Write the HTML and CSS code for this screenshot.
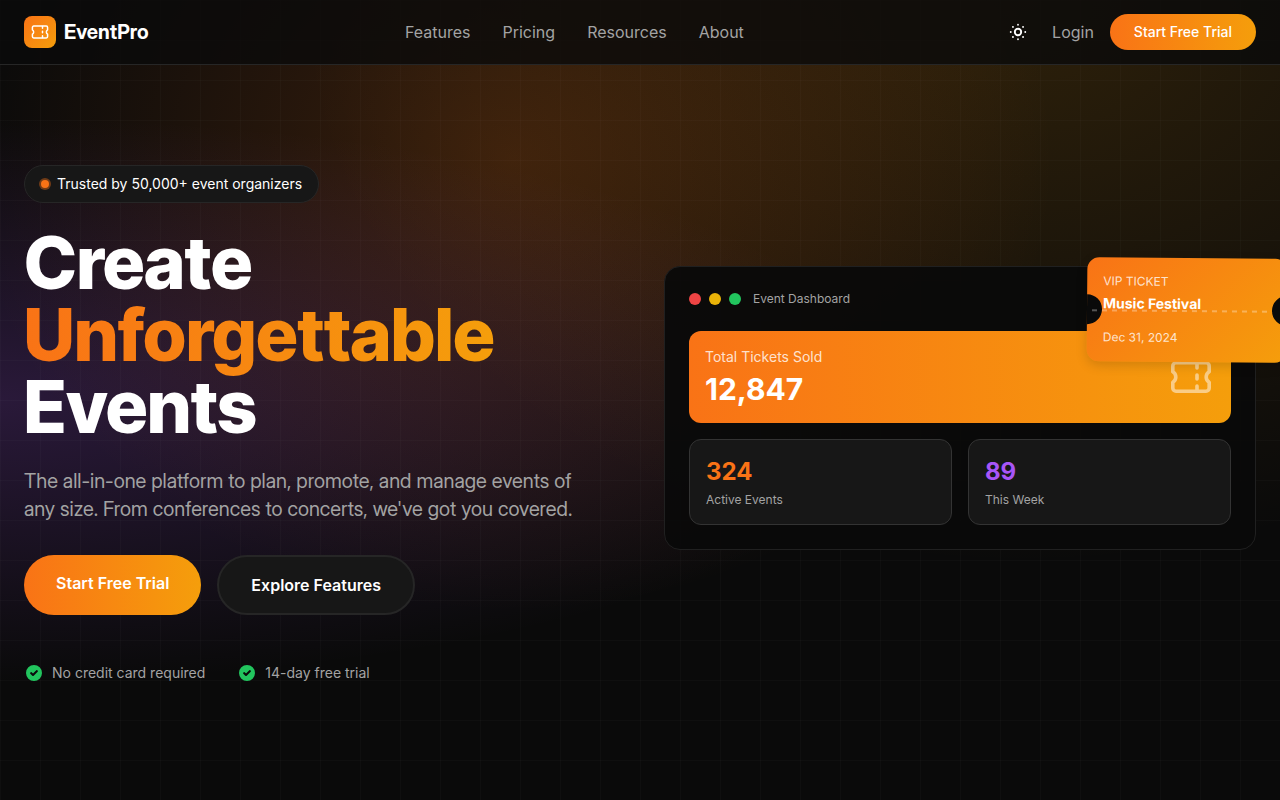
FILE: index.html
```html
<!DOCTYPE html>
<html lang="en">
<head>
<meta charset="utf-8">
<meta name="viewport" content="width=device-width, initial-scale=1">
<title>EventPro</title>
<link rel="stylesheet" href="styles.css">
</head>
<body>
<svg class="sprite" aria-hidden="true">
  <symbol id="ticket" viewBox="0 0 24 24">
    <path d="M2.900 9.400V6.500A1.600 1.600 0 0 1 4.500 4.900h15A1.600 1.600 0 0 1 21.100 6.500v2.900a3 3 0 0 0 0 5.200v2.900a1.600 1.600 0 0 1-1.600 1.600h-15A1.600 1.600 0 0 1 2.900 17.500v-2.900a3 3 0 0 0 0-5.200z" fill="none" stroke="currentColor" stroke-width="1.800" stroke-linejoin="round"/>
    <path d="M15 5.500v2M15 11v2M15 16.500v2" fill="none" stroke="currentColor" stroke-width="1.800" stroke-linecap="round"/>
  </symbol>
  <symbol id="check" viewBox="0 0 20 20">
    <path fill-rule="evenodd" fill="currentColor" d="M10 18a8 8 0 1 0 0-16 8 8 0 0 0 0 16zm3.700-9.300a1 1 0 0 0-1.400-1.400L9 10.600 7.700 9.300a1 1 0 0 0-1.400 1.400l2 2a1 1 0 0 0 1.400 0l4-4z"/>
  </symbol>
</svg>

<header class="header">
  <a class="brand" href="#">
    <span class="brand-mark"><svg class="icon-sm"><use href="#ticket"/></svg></span>
    <span>EventPro</span>
  </a>
  <nav class="nav">
    <a href="#">Features</a>
    <a href="#">Pricing</a>
    <a href="#">Resources</a>
    <a href="#">About</a>
  </nav>
  <div class="actions">
    <button class="theme" type="button" aria-label="Toggle theme">
      <svg class="icon-sm" viewBox="0 0 20 20">
        <circle cx="10" cy="10" r="3.200" fill="none" stroke="currentColor" stroke-width="1.900"/>
        <g stroke="currentColor" stroke-width="1.800" stroke-linecap="round">
          <path d="M10 2.700v.1M10 17.200v.1M2.700 10h.1M17.200 10h.1M4.900 4.900h.1M15 15h.1M4.900 15h.1M15 4.900h.1"/>
        </g>
      </svg>
    </button>
    <a class="login" href="#">Login</a>
    <a class="pill pill-small" href="#">Start Free Trial</a>
  </div>
</header>

<main class="hero">
  <section class="intro">
    <p class="badge"><span class="pulse"></span>Trusted by 50,000+ event organizers</p>
    <h1>Create <span class="accent">Unforgettable</span> Events</h1>
    <p class="lead">The all-in-one platform to plan, promote, and manage events of any size. From conferences to concerts, we've got you covered.</p>
    <div class="cta">
      <a class="pill pill-large" href="#">Start Free Trial</a>
      <a class="pill-outline" href="#">Explore Features</a>
    </div>
    <ul class="perks">
      <li><svg class="icon-sm"><use href="#check"/></svg>No credit card required</li>
      <li><svg class="icon-sm"><use href="#check"/></svg>14-day free trial</li>
    </ul>
  </section>

  <section class="preview" aria-label="Event Dashboard">
    <div class="dashboard">
      <div class="window-bar">
        <span class="dot red"></span><span class="dot yellow"></span><span class="dot green"></span>
        <span class="window-title">Event Dashboard</span>
      </div>
      <div class="sales">
        <div>
          <p class="sales-label">Total Tickets Sold</p>
          <p class="sales-value">12,847</p>
        </div>
        <svg class="icon-lg"><use href="#ticket"/></svg>
      </div>
      <div class="stats">
        <div class="stat"><p class="stat-value orange">324</p><p class="stat-label">Active Events</p></div>
        <div class="stat"><p class="stat-value purple">89</p><p class="stat-label">This Week</p></div>
      </div>
    </div>
    <aside class="ticket">
      <p class="ticket-kind">VIP TICKET</p>
      <p class="ticket-name">Music Festival</p>
      <p class="ticket-date">Dec 31, 2024</p>
      <span class="notch notch-left"></span>
      <span class="tear"></span>
      <span class="notch notch-right"></span>
    </aside>
  </section>
</main>
</body>
</html>
```

FILE: styles.css
```css
:root {
  --bg: #0a0a0a;
  --surface: #171717;
  --line: #262626;
  --muted: #a3a3a3;
  --orange: #f97316;
  --amber: #f59e0b;
  --display: "Inter Display", Inter, "Liberation Sans", sans-serif;
  --tight: "Inter Tight", Inter, "Liberation Sans", sans-serif;
}

* { box-sizing: border-box; margin: 0; padding: 0; }

body {
  min-height: 100vh;
  display: flex;
  flex-direction: column;
  overflow-x: hidden;
  font: 16px/24px Inter, "Liberation Sans", sans-serif;
  color: #fff;
  background-color: var(--bg);
  background-image:
    linear-gradient(rgba(255, 255, 255, 0.02) 1px, transparent 1px),
    linear-gradient(90deg, rgba(255, 255, 255, 0.02) 1px, transparent 1px),
    radial-gradient(at 40% 20%, rgba(249, 115, 22, 0.2) 0, transparent 50%),
    radial-gradient(at 80% 0%, rgba(245, 158, 11, 0.15) 0, transparent 50%),
    radial-gradient(at 0% 50%, rgba(168, 85, 247, 0.2) 0, transparent 50%);
  background-size: 40px 40px, 40px 40px, 100% 100%, 100% 100%, 100% 100%;
}

a { color: inherit; text-decoration: none; }
.sprite { position: absolute; width: 0; height: 0; }
.icon-sm { width: 20px; height: 20px; flex: none; }
.icon-lg { width: 48px; height: 48px; flex: none; opacity: 0.5; }

.header {
  display: flex;
  align-items: center;
  justify-content: space-between;
  padding: 14px 24px;
  background: rgba(10, 10, 10, 0.8);
  border-bottom: 1px solid var(--line);
}
.brand {
  display: flex;
  align-items: center;
  gap: 8px;
  font-family: var(--display);
  font-size: 20px;
  line-height: 28px;
  font-weight: 700;
}
.brand-mark {
  display: grid;
  place-items: center;
  width: 32px;
  height: 32px;
  border-radius: 8px;
  background: linear-gradient(135deg, var(--orange), var(--amber));
}
.nav { display: flex; gap: 32px; color: var(--muted); }
.actions { display: flex; align-items: center; gap: 16px; }
.theme {
  display: grid;
  place-items: center;
  width: 36px;
  height: 36px;
  border: 0;
  border-radius: 8px;
  background: none;
  color: #fff;
}
.login { color: var(--muted); }
.pill {
  border-radius: 32px;
  background: linear-gradient(90deg, var(--orange), var(--amber));
}
.pill-small { padding: 8px 24px; font-size: 14px; line-height: 20px; font-weight: 500; }

.hero {
  flex: 1;
  display: grid;
  grid-template-columns: 1fr 1fr;
  gap: 48px;
  align-items: center;
  padding: 32px 24px 50px;
}

.badge {
  display: inline-flex;
  align-items: center;
  gap: 8px;
  padding: 8px 16px;
  margin-bottom: 24px;
  border: 1px solid var(--line);
  border-radius: 32px;
  background: var(--surface);
  font-size: 14px;
  line-height: 20px;
}
.pulse {
  width: 8px;
  height: 8px;
  border-radius: 50%;
  background: var(--orange);
  box-shadow: 0 0 0 2px rgba(249, 115, 22, 0.4);
}
h1 {
  margin-bottom: 24px;
  font-family: var(--tight);
  font-size: 72px;
  line-height: 72px;
  font-weight: 800;
}
.accent {
  color: transparent;
  background: linear-gradient(90deg, var(--orange), var(--amber));
  -webkit-background-clip: text;
  background-clip: text;
}
.lead {
  max-width: 576px;
  margin-bottom: 32px;
  font-family: var(--display);
  font-size: 20px;
  line-height: 28px;
  color: var(--muted);
}
.cta { display: flex; gap: 16px; margin-bottom: 48px; font-weight: 600; }
.pill-large { padding: 16px 32px; }
.pill-outline {
  padding: 16px 32px;
  border: 2px solid var(--line);
  border-radius: 32px;
  background: var(--surface);
}
.perks { display: flex; gap: 32px; list-style: none; font-size: 14px; line-height: 20px; color: var(--muted); }
.perks li { display: flex; align-items: center; gap: 8px; }
.perks svg { color: #22c55e; }

.preview { position: relative; margin-bottom: 32px; }
.dashboard {
  padding: 24px;
  border: 1px solid #202020;
  border-radius: 16px;
  background: rgba(10, 10, 10, 0.95);
}
.window-bar { display: flex; align-items: center; gap: 8px; margin-bottom: 24px; }
.dot { width: 12px; height: 12px; border-radius: 50%; }
.red { background: #ef4444; }
.yellow { background: #eab308; }
.green { background: #22c55e; }
.window-title { margin-left: 4px; font-size: 12px; line-height: 16px; color: var(--muted); }
.sales {
  display: flex;
  align-items: center;
  justify-content: space-between;
  padding: 16px;
  margin-bottom: 16px;
  border-radius: 12px;
  background: linear-gradient(90deg, var(--orange), var(--amber));
}
.sales-label { font-size: 14px; line-height: 20px; margin-bottom: 4px; color: rgba(255, 255, 255, 0.8); }
.sales-value { font-size: 30px; line-height: 36px; font-weight: 700; }
.stats { display: grid; grid-template-columns: 1fr 1fr; gap: 16px; }
.stat { padding: 16px; border: 1px solid #333; border-radius: 12px; background: var(--surface); }
.stat-value { font-size: 24px; line-height: 32px; font-weight: 700; margin-bottom: 4px; }
.stat-label { font-size: 12px; line-height: 16px; color: var(--muted); }
.orange { color: var(--orange); }
.purple { color: #a855f7; }

.ticket {
  position: absolute;
  top: -8px;
  right: -31px;
  width: 200px;
  padding: 16px;
  overflow: hidden;
  border-radius: 12px;
  background: linear-gradient(135deg, var(--orange), var(--amber));
  box-shadow: 0 4px 12px rgba(0, 0, 0, 0.15);
  transform: rotate(0.5deg);
}
.ticket-kind { font-size: 12px; line-height: 16px; margin-bottom: 4px; color: rgba(255, 255, 255, 0.8); }
.ticket-name { font-size: 14px; line-height: 20px; margin-bottom: 16px; font-weight: 700; }
.ticket-date { font-size: 12px; line-height: 16px; color: rgba(255, 255, 255, 0.8); }
.notch {
  position: absolute;
  top: calc(50% - 15px);
  width: 30px;
  height: 30px;
  border-radius: 50%;
  background: var(--bg);
}
.notch-left { left: -15px; }
.notch-right { right: -15px; }
.tear {
  position: absolute;
  top: 50%;
  left: 0;
  right: 0;
  height: 2px;
  background: repeating-linear-gradient(90deg, transparent 0 5px, rgba(255, 255, 255, 0.3) 5px 10px);
}

@media (max-width: 900px) {
  .hero { grid-template-columns: 1fr; }
  .nav { display: none; }
}
```
